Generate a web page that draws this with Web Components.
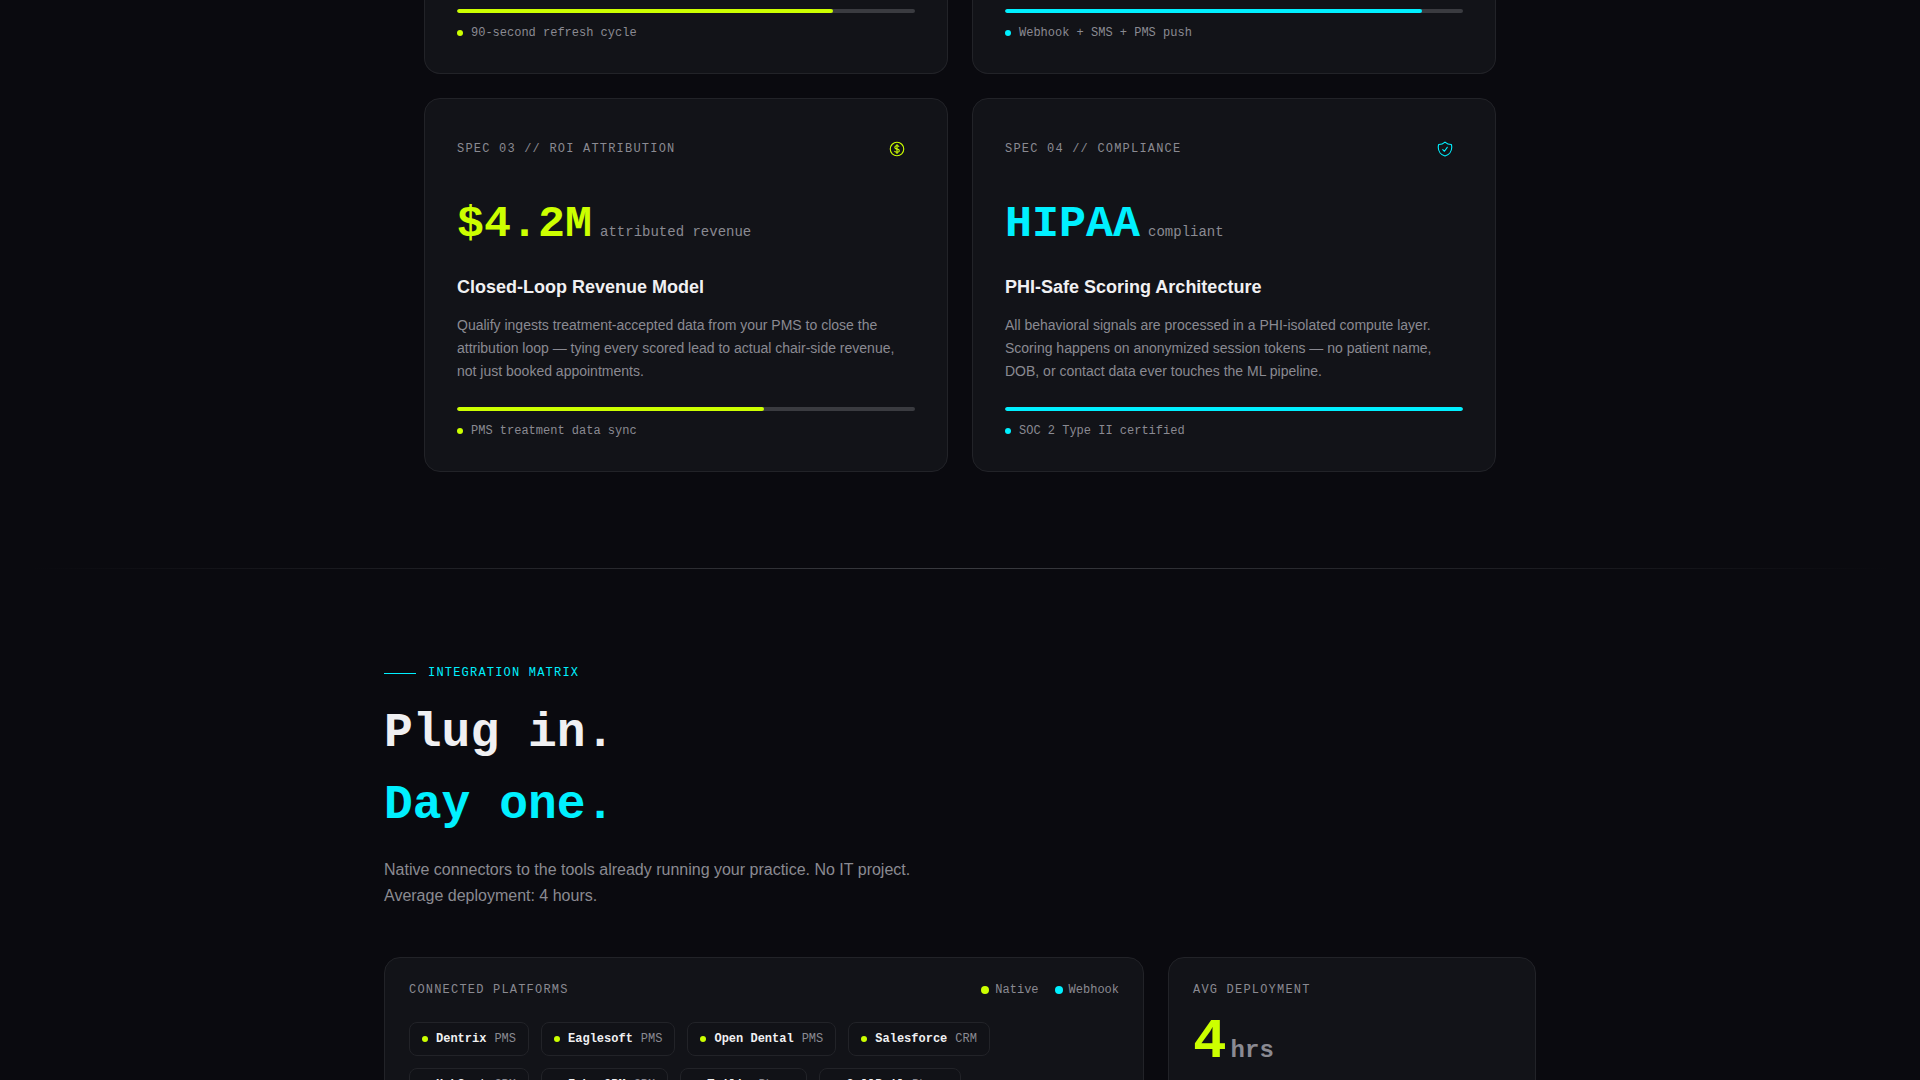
<!DOCTYPE html>
<html lang="en">
<head>
<meta charset="utf-8">
<title>Qualify – Specs and integrations</title>
<style>
:root {
  --bg: #0a0a0f;
  --card: #121318;
  --line: #222328;
  --track: #3a3b40;
  --text: #f0f0f2;
  --muted: #8a8a92;
  --lime: #ccff00;
  --cyan: #00f0ff;
  --mono: "Liberation Mono", monospace;
  --sans: "Liberation Sans", Arial, sans-serif;
}
html, body { margin: 0; height: 100%; overflow: hidden; }
body { background: var(--bg); color: var(--text); font: 14px/23px var(--sans); }
</style>
</head>
<body>
<qualify-page></qualify-page>

<template id="t-page">
  <style>
    :host { display: block; }
    .specs { box-sizing: border-box; max-width: 1152px; margin: 0 auto; padding: 0 40px 96px; display: grid; grid-template-columns: 1fr 1fr; gap: 24px; }
    .divider { height: 1px; margin: 0 32px; background: linear-gradient(90deg, transparent, var(--track), transparent); }
    .matrix { max-width: 1152px; margin: 0 auto; padding: 96px 0; }
    .panels { margin-top: 48px; display: grid; grid-template-columns: repeat(12, 1fr); gap: 24px; }
    .wide { grid-column: span 8; }
    .side { grid-column: span 4; }
    .chips { display: flex; flex-wrap: wrap; gap: 12px; }
    .legend { display: flex; gap: 16px; }
  </style>
  <main>
    <section class="specs">
      <spec-card continued tone="lime" progress="82" note="90-second refresh cycle"></spec-card>
      <spec-card continued tone="cyan" progress="91" note="Webhook + SMS + PMS push"></spec-card>
      <spec-card tone="lime" label="SPEC 03 // ROI ATTRIBUTION" icon="dollar" value="$4.2M" unit="attributed revenue" heading="Closed-Loop Revenue Model" progress="67" note="PMS treatment data sync">Qualify ingests treatment-accepted data from your PMS to close the attribution loop — tying every scored lead to actual chair-side revenue, not just booked appointments.</spec-card>
      <spec-card tone="cyan" label="SPEC 04 // COMPLIANCE" icon="shield" value="HIPAA" unit="compliant" heading="PHI-Safe Scoring Architecture" progress="100" note="SOC 2 Type II certified">All behavioral signals are processed in a PHI-isolated compute layer. Scoring happens on anonymized session tokens — no patient name, DOB, or contact data ever touches the ML pipeline.</spec-card>
    </section>
    <div class="divider"></div>
    <section class="matrix">
      <section-intro eyebrow="INTEGRATION MATRIX">
        <span slot="first">Plug in.</span>
        <span slot="second">Day one.</span>
        Native connectors to the tools already running your practice. No IT project. Average deployment: 4 hours.
      </section-intro>
      <div class="panels">
        <info-panel class="wide" label="CONNECTED PLATFORMS">
          <div slot="aside" class="legend">
            <legend-key tone="lime">Native</legend-key>
            <legend-key tone="cyan">Webhook</legend-key>
          </div>
          <div class="chips">
            <platform-chip kind="PMS">Dentrix</platform-chip>
            <platform-chip kind="PMS">Eaglesoft</platform-chip>
            <platform-chip kind="PMS">Open Dental</platform-chip>
            <platform-chip kind="CRM">Salesforce</platform-chip>
            <platform-chip kind="CRM">HubSpot</platform-chip>
            <platform-chip kind="CRM">Zoho CRM</platform-chip>
            <platform-chip kind="Phone">Twilio</platform-chip>
            <platform-chip kind="Phone">CallRail</platform-chip>
          </div>
        </info-panel>
        <info-panel class="side" tight label="AVG DEPLOYMENT">
          <big-stat unit="hrs">4</big-stat>
        </info-panel>
      </div>
    </section>
  </main>
</template>

<template id="t-spec-card">
  <style>
    :host { display: block; box-sizing: border-box; padding: 32px; background: var(--card); border: 1px solid var(--line); border-radius: 16px; --tone: var(--lime); }
    :host([tone="cyan"]) { --tone: var(--cyan); }
    :host([continued]) { border-top: 0; border-radius: 0 0 16px 16px; padding-top: 9px; }
    .head { display: flex; justify-content: space-between; align-items: center; margin-bottom: 28px; }
    .label { font: 12px/16px var(--mono); letter-spacing: 0.1em; color: var(--muted); }
    .icon { width: 36px; height: 36px; display: flex; align-items: center; justify-content: center; color: var(--tone); }
    .icon svg { width: 18px; height: 18px; }
    .stat { display: flex; align-items: baseline; gap: 8px; font-family: var(--mono); }
    .value { font-size: 45px; line-height: 60px; font-weight: 700; color: var(--tone); }
    .unit { font-size: 14px; line-height: 16px; color: var(--muted); }
    h3 { margin: 18px 0 12px; font: 700 18px/29px var(--sans); color: var(--text); }
    p { margin: 0 0 24px; font: 14px/23px var(--sans); color: var(--muted); }
    .track { height: 4px; border-radius: 2px; background: var(--track); overflow: hidden; }
    .fill { height: 100%; border-radius: 2px; background: var(--tone); }
    .note { display: flex; align-items: center; gap: 8px; margin-top: 12px; font: 12px/16px var(--mono); color: var(--muted); }
    .dot { width: 6px; height: 6px; border-radius: 50%; background: var(--tone); }
  </style>
  <div class="detail">
    <div class="head"><span class="label"></span><span class="icon"></span></div>
    <div class="stat"><span class="value"></span><span class="unit"></span></div>
    <h3></h3>
    <p><slot></slot></p>
  </div>
  <div class="track" role="progressbar" aria-valuemin="0" aria-valuemax="100"><div class="fill"></div></div>
  <div class="note"><span class="dot"></span><span class="text"></span></div>
</template>

<template id="t-intro">
  <style>
    :host { display: block; }
    .eyebrow { display: flex; align-items: center; gap: 12px; font: 12px/16px var(--mono); letter-spacing: 0.1em; color: var(--cyan); }
    .eyebrow::before { content: ""; width: 32px; height: 1px; background: var(--cyan); }
    h2 { margin: 16px 0; font: 700 48px/72px var(--mono); color: var(--text); }
    h2 span { display: block; }
    .accent { color: var(--cyan); }
    p { margin: 0; max-width: 560px; font: 16px/26px var(--sans); color: var(--muted); }
  </style>
  <div class="eyebrow"><span class="text"></span></div>
  <h2><span><slot name="first"></slot></span><span class="accent"><slot name="second"></slot></span></h2>
  <p><slot></slot></p>
</template>

<template id="t-panel">
  <style>
    :host { display: block; box-sizing: border-box; padding: 24px; background: var(--card); border: 1px solid var(--line); border-radius: 16px; }
    header { display: flex; justify-content: space-between; align-items: center; margin-bottom: 24px; font: 12px/16px var(--mono); color: var(--muted); }
    :host([tight]) header { margin-bottom: 16px; }
    .label { letter-spacing: 0.1em; }
  </style>
  <header><span class="label"></span><slot name="aside"></slot></header>
  <slot></slot>
</template>

<template id="t-key">
  <style>
    :host { display: flex; align-items: center; gap: 6px; font: 12px/16px var(--mono); color: var(--muted); --tone: var(--lime); }
    :host([tone="cyan"]) { --tone: var(--cyan); }
    i { width: 8px; height: 8px; border-radius: 50%; background: var(--tone); }
  </style>
  <i></i><slot></slot>
</template>

<template id="t-chip">
  <style>
    :host { display: flex; align-items: center; gap: 8px; padding: 8px 12px; border: 1px solid var(--line); border-radius: 8px; background: #111217; font: 12px/16px var(--mono); color: var(--text); }
    i { width: 6px; height: 6px; border-radius: 50%; background: var(--lime); }
    b { font-weight: 700; }
    .kind { color: var(--muted); }
  </style>
  <i></i><b><slot></slot></b><span class="kind"></span>
</template>

<template id="t-stat">
  <style>
    :host { display: flex; align-items: baseline; gap: 4px; font: 700 56px/56px var(--mono); color: var(--lime); }
    .unit { font-size: 24px; line-height: 24px; color: var(--muted); }
  </style>
  <span><slot></slot></span><span class="unit"></span>
</template>

<script>
const ICONS = {
  dollar: '<svg viewBox="0 0 24 24" fill="none" stroke="currentColor" stroke-width="1.5" stroke-linecap="round" stroke-linejoin="round" aria-hidden="true"><path d="M12 6v12m-3-2.818.879.659c1.171.879 3.07.879 4.242 0 1.172-.879 1.172-2.303 0-3.182C13.536 12.219 12.768 12 12 12c-.725 0-1.45-.22-2.003-.659-1.106-.879-1.106-2.303 0-3.182s2.9-.879 4.006 0l.415.33M21 12a9 9 0 1 1-18 0 9 9 0 0 1 18 0Z"/></svg>',
  shield: '<svg viewBox="0 0 24 24" fill="none" stroke="currentColor" stroke-width="1.5" stroke-linecap="round" stroke-linejoin="round" aria-hidden="true"><path d="M9 12.75 11.25 15 15 9.75m-3-7.036A11.959 11.959 0 0 1 3.598 6 11.99 11.99 0 0 0 3 9.749c0 5.592 3.824 10.29 9 11.623 5.176-1.332 9-6.03 9-11.622 0-1.31-.21-2.571-.598-3.751h-.152c-3.196 0-6.1-1.248-8.25-3.285Z"/></svg>'
};

class TemplateElement extends HTMLElement {
  constructor() {
    super();
    const template = document.getElementById(this.constructor.template);
    this.attachShadow({ mode: 'open' }).append(template.content.cloneNode(true));
  }
  connectedCallback() { this.render(); }
  render() {}
  $(selector) { return this.shadowRoot.querySelector(selector); }
  attr(name) { return this.getAttribute(name) || ''; }
}

class SpecCard extends TemplateElement {
  static template = 't-spec-card';
  render() {
    if (this.hasAttribute('continued')) {
      this.$('.detail')?.remove();
    } else {
      this.$('.label').textContent = this.attr('label');
      this.$('.icon').innerHTML = ICONS[this.attr('icon')] || '';
      this.$('.value').textContent = this.attr('value');
      this.$('.unit').textContent = this.attr('unit');
      this.$('h3').textContent = this.attr('heading');
    }
    this.$('.fill').style.width = this.attr('progress') + '%';
    this.$('.track').setAttribute('aria-valuenow', this.attr('progress'));
    this.$('.track').setAttribute('aria-label', this.attr('note'));
    this.$('.text').textContent = this.attr('note');
  }
}
class SectionIntro extends TemplateElement {
  static template = 't-intro';
  render() { this.$('.text').textContent = this.attr('eyebrow'); }
}
class InfoPanel extends TemplateElement {
  static template = 't-panel';
  render() { this.$('.label').textContent = this.attr('label'); }
}
class LegendKey extends TemplateElement {
  static template = 't-key';
}
class PlatformChip extends TemplateElement {
  static template = 't-chip';
  render() { this.$('.kind').textContent = this.attr('kind'); }
}
class BigStat extends TemplateElement {
  static template = 't-stat';
  render() { this.$('.unit').textContent = this.attr('unit'); }
}
class QualifyPage extends TemplateElement {
  static template = 't-page';
}

customElements.define('spec-card', SpecCard);
customElements.define('section-intro', SectionIntro);
customElements.define('info-panel', InfoPanel);
customElements.define('legend-key', LegendKey);
customElements.define('platform-chip', PlatformChip);
customElements.define('big-stat', BigStat);
customElements.define('qualify-page', QualifyPage);
</script>
</body>
</html>
